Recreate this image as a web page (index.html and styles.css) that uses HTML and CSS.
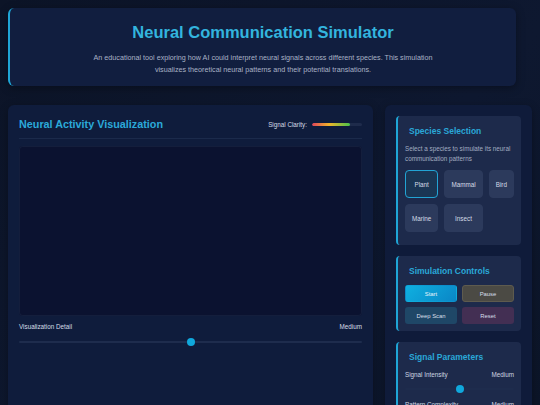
FILE: index.html
```html
<!DOCTYPE html>
<html>
<head>
<meta charset="utf-8">
<link rel="stylesheet" href="styles.css">
</head>
<body>
<header class="hero">
  <h1 class="hero-title">Neural Communication Simulator</h1>
  <p class="hero-text">An educational tool exploring how AI could interpret neural signals across different species. This simulation visualizes theoretical neural patterns and their potential translations.</p>
</header>
<main class="layout">
  <section class="viz-panel">
    <div class="viz-head">
      <h2 class="viz-title">Neural Activity Visualization</h2>
      <div class="clarity">
        <span class="clarity-label">Signal Clarity:</span>
        <span class="clarity-bar"><span class="clarity-fill"></span></span>
      </div>
    </div>
    <div class="canvas"></div>
    <div class="row-label"><span>Visualization Detail</span><span>Medium</span></div>
    <div class="slider"><span class="thumb thumb-mid"></span></div>
  </section>
  <aside class="side">
    <div class="card">
      <h3 class="card-title">Species Selection</h3>
      <p class="card-text">Select a species to simulate its neural communication patterns</p>
      <div class="species">
        <button class="sp sp-active">Plant</button>
        <button class="sp">Mammal</button>
        <button class="sp">Bird</button>
        <button class="sp">Marine</button>
        <button class="sp">Insect</button>
      </div>
    </div>
    <div class="card card-controls">
      <h3 class="card-title">Simulation Controls</h3>
      <div class="controls">
        <button class="ctl ctl-start">Start</button>
        <button class="ctl ctl-pause">Pause</button>
        <button class="ctl ctl-scan">Deep Scan</button>
        <button class="ctl ctl-reset">Reset</button>
      </div>
    </div>
    <div class="card">
      <h3 class="card-title">Signal Parameters</h3>
      <div class="row-label param first"><span>Signal Intensity</span><span>Medium</span></div>
      <div class="slider small"><span class="thumb thumb-mid"></span></div>
      <div class="row-label param"><span>Pattern Complexity</span><span>Medium</span></div>
      <div class="slider small"><span class="thumb thumb-mid"></span></div>
    </div>
  </aside>
</main>
</body>
</html>
```
FILE: styles.css
```css
* { box-sizing: border-box; }
html, body { margin: 0; height: 100%; overflow: hidden; }
body {
  padding: 8px;
  background: linear-gradient(135deg, #0c1427 0%, #0e1830 60%, #0c1528 100%);
  font-family: "Liberation Sans", Arial, sans-serif;
  color: #d6dde9;
}
.hero {
  width: 508px;
  height: 78px;
  background: #111e3f;
  border-left: 2px solid #1fa5d6;
  border-radius: 6px;
  box-shadow: 0 2px 8px rgba(0,0,0,0.35);
  text-align: center;
  padding-top: 14px;
  margin-bottom: 19px;
}
.hero-title {
  margin: 0;
  font-size: 16.5px;
  font-weight: bold;
  color: #33b4de;
  line-height: 20px;
}
.hero-text {
  margin: 10px auto 0;
  width: 362px;
  font-size: 7.2px;
  line-height: 12px;
  color: #a9b3c6;
}
.layout {
  display: grid;
  grid-template-columns: 365px 147px;
  column-gap: 12px;
}
.viz-panel {
  background: #0f1c3c;
  border-radius: 6px;
  padding: 11px 11px 0;
  height: 320px;
  box-shadow: 0 2px 8px rgba(0,0,0,0.3);
}
.viz-head {
  display: flex;
  justify-content: space-between;
  align-items: center;
  height: 23px;
  border-bottom: 1px solid #1b2a4b;
  margin-bottom: 7px;
}
.viz-title {
  margin: -6px 0 0;
  font-size: 10.8px;
  font-weight: bold;
  color: #2ba9d9;
}
.clarity { display: flex; align-items: center; gap: 5px; margin-top: -6px; }
.clarity-label { font-size: 6.3px; color: #d5dbe6; }
.clarity-bar {
  display: block;
  width: 50px;
  height: 3px;
  border-radius: 2px;
  background: #1e2b4b;
  overflow: hidden;
}
.clarity-fill {
  display: block;
  width: 76%;
  height: 100%;
  border-radius: 2px;
  background: linear-gradient(90deg, #e0445a 0%, #f0b429 45%, #49c24a 100%);
}
.canvas {
  height: 170px;
  background: #0b1230;
  border-radius: 4px;
  box-shadow: inset 0 0 0 1px #141e3c;
}
.row-label {
  display: flex;
  justify-content: space-between;
  font-size: 6.3px;
  line-height: 7px;
  color: #d6dde8;
  margin-top: 7px;
}
.slider {
  position: relative;
  height: 2px;
  background: #1e2c4d;
  border-radius: 1px;
  margin-top: 11px;
}
.thumb {
  position: absolute;
  top: 50%;
  width: 8px;
  height: 8px;
  margin: -4px 0 0 -4px;
  border-radius: 50%;
  background: #10a8dc;
}
.thumb-mid { left: 50%; }
.side {
  background: #0f1b3a;
  border-radius: 6px;
  padding: 11px;
  height: 320px;
  display: flex;
  flex-direction: column;
  gap: 11px;
  box-shadow: 0 2px 8px rgba(0,0,0,0.3);
}
.card {
  background: #1d2a4b;
  border-left: 2px solid #1fa5d6;
  border-radius: 4px;
  padding: 7px 7px 13px 7px;
  flex-shrink: 0;
}
.card-title {
  margin: 2px 0 0 4px;
  font-size: 8.5px;
  font-weight: bold;
  color: #2aa8d8;
  line-height: 12px;
}
.card-text {
  margin: 7px 0 0;
  font-size: 6.3px;
  line-height: 10px;
  color: #a3adc1;
}
.species {
  display: grid;
  grid-template-columns: repeat(3, auto);
  gap: 6px;
  margin-top: 6px;
}
.sp {
  font-family: inherit;
  font-size: 6.3px;
  color: #d4dbe7;
  background: #2c3a5c;
  border: 1px solid #2c3a5c;
  border-radius: 4px;
  height: 28px;
  padding: 0 5px;
}
.sp-active {
  background: #1a3654;
  border-color: #22a4d4;
}
.controls {
  display: grid;
  grid-template-columns: 1fr 1fr;
  gap: 5px;
  margin-top: 8px;
}
.card-controls { padding-bottom: 7px; }
.ctl {
  font-family: inherit;
  font-size: 5.9px;
  color: #d8dfea;
  height: 17px;
  border-radius: 3px;
  border: 1px solid transparent;
  padding: 0;
}
.ctl-start { background: linear-gradient(135deg, #0fb0e0, #0a86c6); color: #e8f4fb; }
.ctl-pause { background: #4b4a44; border-color: #5e5b4e; }
.ctl-scan { background: #1f4767; }
.ctl-reset { background: #432f53; }
.param { color: #cfd6e2; margin-top: 11px; }
.param.first { margin-top: 8px; }
.slider.small { margin-top: 10px; }
```
